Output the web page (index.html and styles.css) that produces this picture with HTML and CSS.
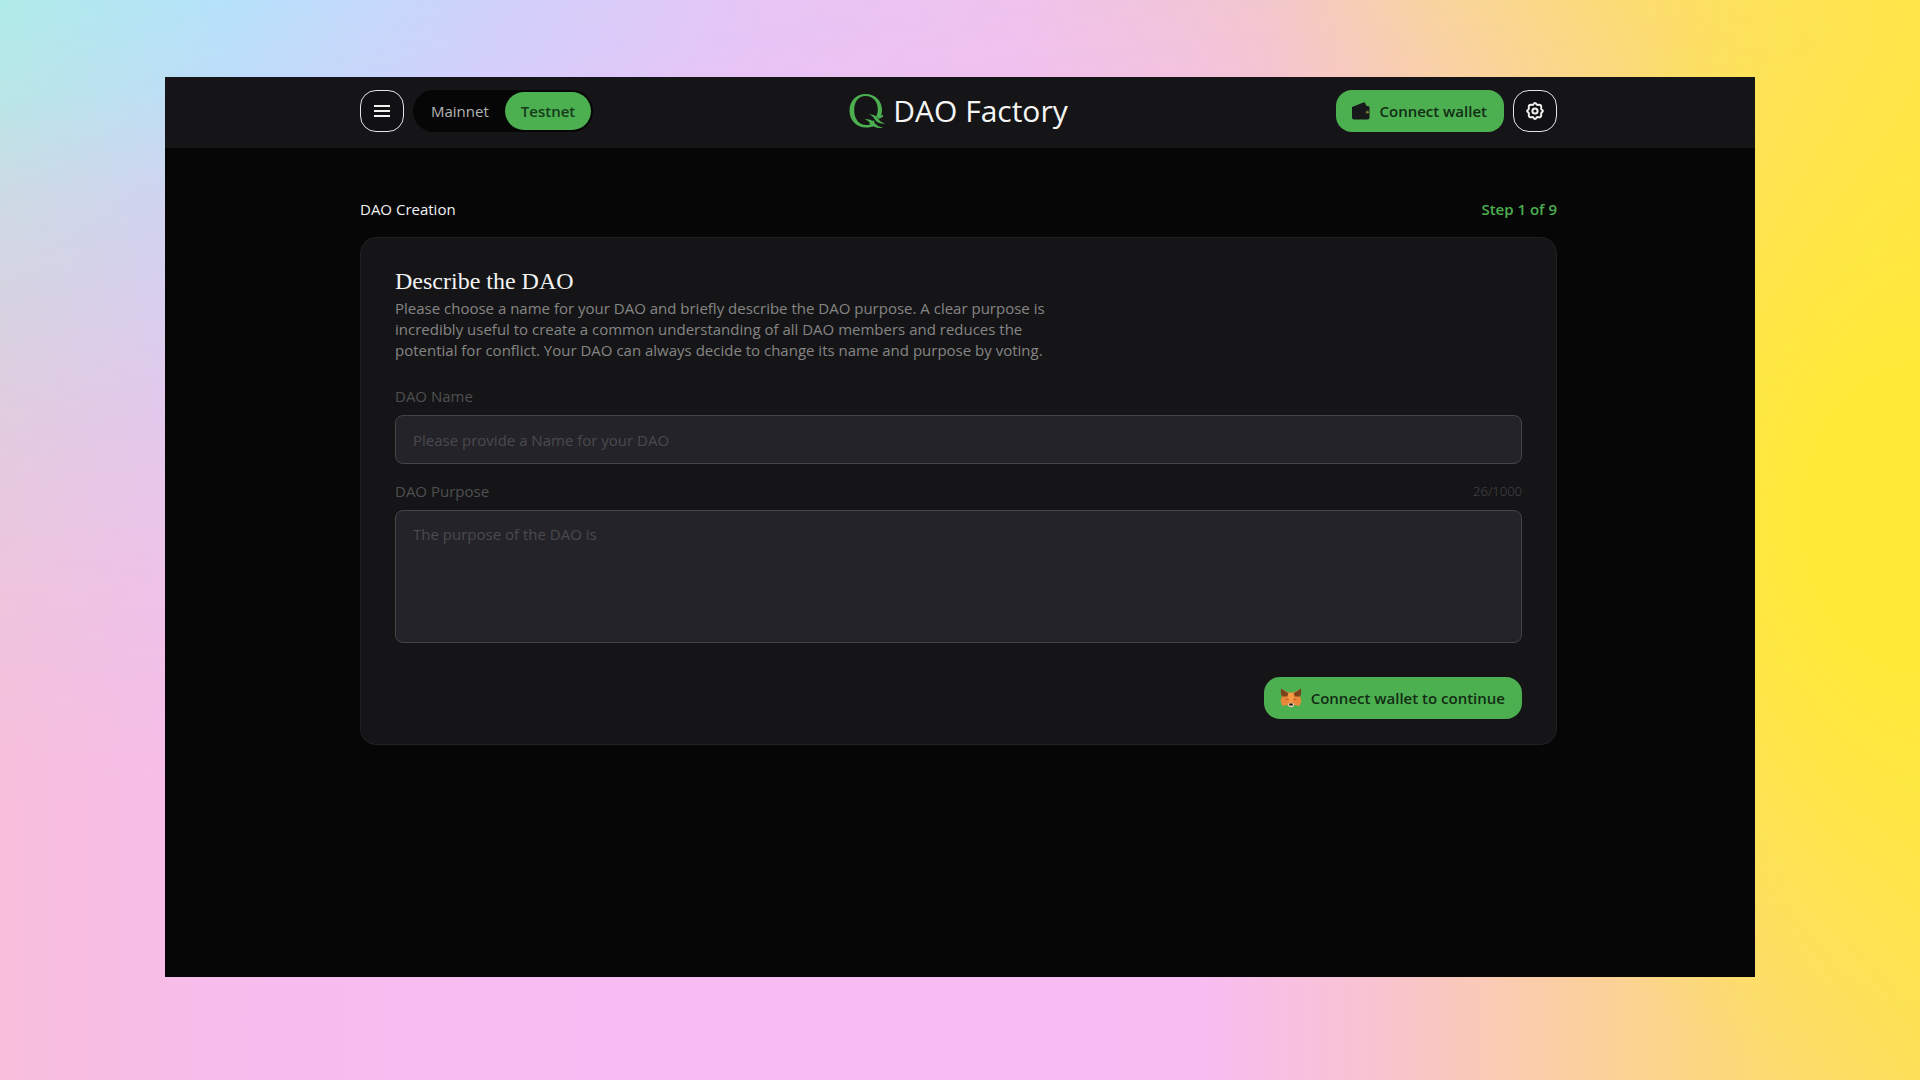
FILE: index.html
```html
<!DOCTYPE html>
<html lang="en">
<head>
  <meta charset="utf-8">
  <meta name="viewport" content="width=device-width, initial-scale=1">
  <title>DAO Factory</title>
  <link rel="stylesheet" href="styles.css">
</head>
<body class="backdrop">
  <div class="window">
    <header class="header">
      <div class="header-side">
        <button class="icon-button" type="button" aria-label="Menu">
          <svg width="18" height="18" viewBox="0 0 18 18" fill="none" stroke="currentColor" stroke-width="2"><path d="M1 4h16M1 9h16M1 14h16"/></svg>
        </button>
        <div class="network">
          <button class="network-option" type="button">Mainnet</button>
          <button class="network-option network-option-active" type="button">Testnet</button>
        </div>
      </div>
      <a class="brand" href="#">
        <svg width="37" height="36" viewBox="0 0 37 36" fill="none">
          <path fill="#4caf50" fill-rule="evenodd" d="M16.500 1C26 1 33 7.500 33 17C33 20.500 32 23.500 30.500 26L27 23.500C28.300 21.500 28.800 19 28.800 16.500C28.800 8.500 24 3 16.500 3C9.500 3 5.200 8.500 5.200 17C5.200 26 10 32 17.500 32C19.500 32 21.500 31.500 23 30.500L26.500 32.500C23.500 34 20.500 34.500 17 34.500C7.500 34.500 0.500 27.500 0.500 17.800C0.500 8 7 1 16.500 1Z"/>
          <path fill="#4caf50" d="M19.500 21.500C24 21 27 22.500 29 25.500C31.500 29 33.500 30 37 30.300C31.500 31.500 28 29.500 25.500 26C24 23.500 22.500 22 19.500 21.500ZM15.500 26.500C20 25.500 23 26.800 25.500 29.800C28 33 30.500 34.300 34 34.500C28.500 36 24.500 34 21.500 30.500C19.500 28.200 18 27 15.500 26.500Z"/>
          <path stroke="#4caf50" stroke-width="2" d="M34 22.500L30 25M25 28L21 31.500"/>
        </svg>
        <span>DAO Factory</span>
      </a>
      <div class="header-side header-side-end">
        <button class="button" type="button">
          <svg width="18" height="18" viewBox="0 0 18 18"><path fill="#17191a" d="M0 5L11.500 0.500Q12.500 0 13 1L14.500 4H16Q17.500 4 17.500 5.500V8.500H14.500Q13 8.500 13 10.200T14.500 12H17.500V15.500Q17.500 17.500 15.500 17.500H2Q0 17.500 0 15.500Z"/><path fill="#17191a" d="M14.500 8.500H17.500V12H14.500Q13 12 13 10.200T14.500 8.500Z"/><circle cx="15.500" cy="10.200" r="1.300" fill="#8a7a35"/></svg>
          Connect wallet
        </button>
        <button class="icon-button" type="button" aria-label="Settings">
          <svg width="18" height="18" viewBox="0 0 18 18" fill="none" stroke="currentColor" stroke-width="2" stroke-linejoin="round"><path d="M7.300 2.600Q9 -0.400 10.700 2.600Q11.500 3.100 12.300 2.800Q15.600 2.400 15.200 5.700Q14.900 6.500 15.400 7.300Q18.400 9 15.400 10.700Q14.900 11.500 15.200 12.300Q15.600 15.600 12.300 15.200Q11.500 14.900 10.700 15.400Q9 18.400 7.300 15.400Q6.500 14.900 5.700 15.200Q2.400 15.600 2.800 12.300Q3.100 11.500 2.600 10.700Q-0.400 9 2.600 7.300Q3.100 6.500 2.800 5.700Q2.400 2.400 5.700 2.800Q6.500 3.100 7.300 2.600Z"/><circle cx="9" cy="9" r="2.600"/></svg>
        </button>
      </div>
    </header>
    <main class="content">
      <div class="progress">
        <span>DAO Creation</span>
        <span class="progress-step">Step 1 of 9</span>
      </div>
      <form class="card">
        <h1 class="card-title">Describe the DAO</h1>
        <p class="card-text">Please choose a name for your DAO and briefly describe the DAO purpose. A clear purpose is incredibly useful to create a common understanding of all DAO members and reduces the potential for conflict. Your DAO can always decide to change its name and purpose by voting.</p>
        <div class="field">
          <label class="field-label" for="dao-name">DAO Name</label>
          <input class="field-control" id="dao-name" type="text" placeholder="Please provide a Name for your DAO">
        </div>
        <div class="field">
          <div class="field-head">
            <label class="field-label" for="dao-purpose">DAO Purpose</label>
            <span class="field-count">26/1000</span>
          </div>
          <textarea class="field-control field-area" id="dao-purpose" placeholder="The purpose of the DAO is"></textarea>
        </div>
        <button class="button card-action" type="button">
          <svg width="22" height="20" viewBox="0 0 22 20">
            <path fill="#e8873a" d="M1 1L8.500 4.500H13.500L21 1L20 8L21.500 13L19.500 18L14.500 17L12.500 19H9.500L7.500 17L2.500 18L0.500 13L2 8Z"/>
            <path fill="#7a431d" d="M1 0.500L8.500 5.500L7 8.500L1.800 8.500L0.800 5ZM21 0.500L13.500 5.500L15 8.500L20.200 8.500L21.200 5Z"/>
            <path fill="#f59a45" d="M8.500 5H13.500L14 11L12.500 16H9.500L8 11Z"/>
            <path fill="#c9622a" d="M4.500 11L8.500 10.500L9 12.500ZM17.500 11L13.500 10.500L13 12.500Z"/>
            <path fill="#e6d5c3" d="M7.500 15.500H14.500L13 19H9Z"/>
            <path fill="#1f1a17" d="M9.500 15.500H12.500L13 17.500H9Z"/>
          </svg>
          Connect wallet to continue
        </button>
      </form>
    </main>
  </div>
</body>
</html>
```
FILE: styles.css
```css
* {
  box-sizing: border-box;
}

body {
  margin: 0;
  font: 15px/21px "Open Sans", "Noto Sans", sans-serif;
  color: #f2f2f2;
}

button {
  font: inherit;
  border: 0;
  cursor: pointer;
}

svg {
  display: block;
  flex: none;
}

.backdrop {
  position: relative;
  min-height: 100vh;
  padding: 77px 165px 103px;
  display: flex;
  background: linear-gradient(90deg, #f8bedb 0%, #f7bcec 12%, #f8bcf5 35%, #f8bcf3 62%, #f8c4cf 72%, #fad0a0 82%, #fcdb72 92%, #fde05c 100%);
}

/* The upper colours fade into the lower ones down the page. */
.backdrop::before {
  content: "";
  position: absolute;
  inset: 0;
  background: linear-gradient(90deg, #b0ece9 0%, #b4e2fb 12%, #cfd1fc 27%, #e4c6f5 40%, #eec3ec 53%, #f2c8c8 66%, #f9d795 75%, #fde25a 88%, #ffe644 100%);
  mask-image: linear-gradient(175deg, #000 0%, #000d 8%, #0009 16%, #0005 32%, #0002 48%, #0000 65%);
}

.backdrop::after {
  content: "";
  position: absolute;
  inset: 0;
  background: radial-gradient(ellipse 24% 55% at 100% 48%, #ffea38 25%, #ffea3800 100%);
}

.window {
  position: relative;
  z-index: 1;
  flex: 1;
  display: flex;
  flex-direction: column;
  background: #060606;
}

.header {
  display: grid;
  grid-template-columns: 1fr auto 1fr;
  align-items: center;
  padding: 13px 198px 16px 195px;
  background: #151517;
}

.header-side {
  display: flex;
  align-items: center;
  gap: 9px;
}

.header-side-end {
  justify-content: flex-end;
}

.icon-button {
  width: 44px;
  height: 42px;
  display: grid;
  place-items: center;
  padding: 0;
  color: #f2f2f2;
  background: #111113;
  border: 1px solid #e4e4e4;
  border-radius: 16px;
}

.network {
  display: flex;
  padding: 2px;
  background: #060606;
  border-radius: 21px;
}

.network-option {
  height: 38px;
  padding: 0 16px;
  color: #b4b4b4;
  background: none;
  border-radius: 19px;
}

.network-option-active {
  color: #163a1a;
  font-weight: 600;
  background: #4caf50;
}

.brand {
  display: flex;
  align-items: center;
  gap: 7px;
  color: #f5f5f5;
  font-size: 30px;
  line-height: 42px;
  text-decoration: none;
}

.button {
  height: 42px;
  display: flex;
  align-items: center;
  gap: 9px;
  padding: 0 17px 0 16px;
  color: #122c14;
  font-weight: 600;
  background: #4caf50;
  border-radius: 16px;
}

.content {
  padding: 51px 198px 51px 195px;
}

.progress {
  display: flex;
  justify-content: space-between;
  margin-bottom: 17px;
}

.progress-step {
  color: #4caf50;
  font-weight: 600;
}

.card {
  display: flex;
  flex-direction: column;
  padding: 28px 34px 25px;
  background: #151517;
  border: 1px solid #212124;
  border-radius: 16px;
}

.card-title {
  margin: 0 0 2px;
  font: 400 24px/30px "Liberation Serif", serif;
}

.card-text {
  max-width: 660px;
  margin: 0 0 25px;
  color: #858585;
}

.field {
  display: flex;
  flex-direction: column;
  gap: 8px;
  margin-bottom: 17px;
}

.field-head {
  display: flex;
  justify-content: space-between;
}

.field-label {
  color: #4f4f51;
}

.field-count {
  color: #48484a;
  font-size: 13px;
  font-weight: 300;
}

.field-control {
  height: 49px;
  padding: 13px 17px;
  font: inherit;
  color: #f2f2f2;
  background: #242329;
  border: 1px solid #444447;
  border-radius: 8px;
  outline: 0;
}

.field-control::placeholder {
  color: #4a4a4e;
  opacity: 1;
}

.field-area {
  height: 133px;
  resize: none;
}

.card-action {
  align-self: flex-end;
  margin-top: 17px;
}
```
